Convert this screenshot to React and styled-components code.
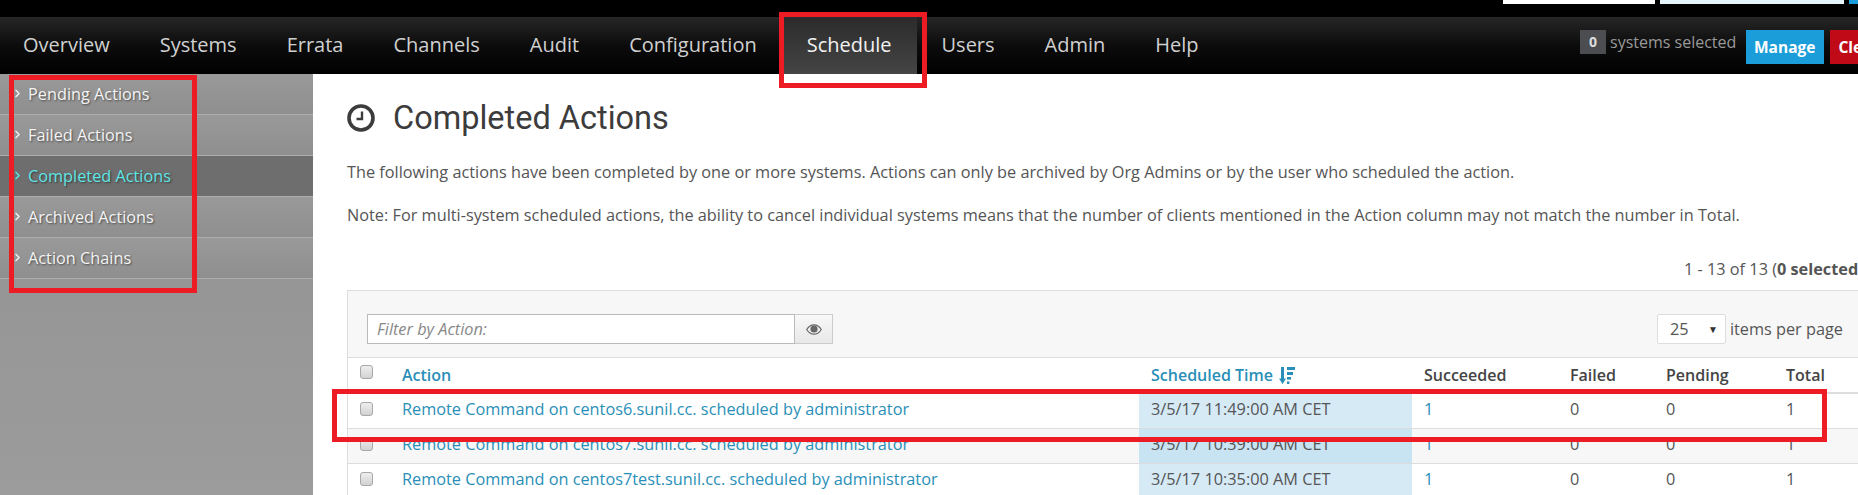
import React from "react";
import styled, { createGlobalStyle } from "styled-components";
import { ChevronRight } from "lucide-react";

const GlobalStyle = createGlobalStyle`
  html, body {
    margin: 0;
    height: 495px;
    overflow: hidden;
    background: #fff;
    font-family: "Open Sans", sans-serif;
    color: #555;
  }
  * { box-sizing: border-box; }
`;

const Page = styled.div`
  position: relative;
  width: 1858px;
  height: 495px;
  overflow: hidden;
`;

const TopStrip = styled.div`
  height: 17px;
  background: #000;
  display: flex;
  justify-content: flex-end;
  gap: 5px;
`;

const TopField = styled.div`
  width: ${(p) => p.$w}px;
  height: 4px;
  background: ${(p) => p.$bg || "#fff"};
`;

const NavBar = styled.div`
  height: 57px;
  display: flex;
  justify-content: space-between;
  background: linear-gradient(to bottom, #262626 0%, #0c0c0c 50%, #000 100%);
`;

const NavList = styled.div`
  display: flex;
`;

const NavItem = styled.div`
  padding: 0 25px 0 ${(p) => (p.$first ? 23 : 25)}px;
  height: 57px;
  line-height: 56px;
  font-size: 20px;
  color: ${(p) => (p.$active ? "#f2f2f2" : "#d0d0d0")};
  background: ${(p) => (p.$active ? "linear-gradient(to bottom, #2b2b2b, #454545)" : "none")};
`;

const SystemsBox = styled.div`
  display: flex;
  width: 278px;
  flex: none;
  padding-top: 13px;
  overflow: hidden;
`;

const CountBadge = styled.div`
  flex: none;
  width: 26px;
  height: 24px;
  background: #4b4d50;
  color: #ddd;
  font-weight: 700;
  font-size: 14px;
  line-height: 23px;
  text-align: center;
`;

const SystemsText = styled.div`
  flex: none;
  width: 140px;
  padding-left: 4px;
  font-size: 16px;
  line-height: 24px;
  color: #999;
  white-space: nowrap;
`;

const NavButton = styled.div`
  flex: none;
  height: 34px;
  line-height: 34px;
  padding: 0 9px 0 8px;
  margin-right: 6px;
  font-size: 15.5px;
  font-weight: 700;
  color: #fff;
  background: ${(p) => p.$bg};
`;

const Main = styled.div`
  display: flex;
  height: 421px;
`;

const Sidebar = styled.div`
  width: 313px;
  flex: none;
  background: linear-gradient(to bottom, #8f8f8f, #9c9c9c);
`;

const SideItem = styled.div`
  height: 41px;
  display: flex;
  align-items: center;
  padding: 0 0 1px 11px;
  gap: 4px;
  font-size: 16.3px;
  color: ${(p) => (p.$active ? "#5fe6e6" : "#f4f4f4")};
  background: ${(p) => (p.$active ? "#6e6e6e" : "linear-gradient(to bottom, #999, #8f8f8f)")};
  border-bottom: 1px solid #adadad;
  text-shadow: 1px 1px 2px rgba(0, 0, 0, 0.5);

  svg {
    flex: none;
  }
`;

const Content = styled.div`
  flex: 1;
  min-width: 0;
  padding: 0 0 0 34px;
`;

const Heading = styled.div`
  display: flex;
  align-items: center;
  gap: 18px;
  height: 32px;
  margin-top: 28px;
  color: #3c3c3c;
  font-family: Roboto, sans-serif;
  font-size: 32.5px;
`;

const Intro = styled.p`
  margin: ${(p) => p.$top}px 0 0;
  font-size: 16.3px;
  line-height: 22px;
  white-space: nowrap;
`;

const Count = styled.div`
  margin: 32px -5px 0 0;
  font-size: 16.3px;
  line-height: 22px;
  text-align: right;
  white-space: nowrap;

  b {
    font-weight: 700;
  }
`;

const Panel = styled.div`
  width: 1530px;
  margin-top: 10px;
  border: 1px solid #ddd;
  border-bottom: none;
`;

const FilterRow = styled.div`
  display: flex;
  justify-content: space-between;
  align-items: center;
  height: 67px;
  padding: 10px 33px 0 19px;
  background: #f7f7f7;
  border-bottom: 1px solid #ddd;
`;

const FilterGroup = styled.div`
  display: flex;
  align-items: center;
`;

const FilterInput = styled.div`
  width: 428px;
  height: 30px;
  padding-left: 9px;
  font-size: 16.3px;
  line-height: 28px;
  font-style: italic;
  color: #888;
  background: #fff;
  border: 1px solid #bbb;
`;

const EyeButton = styled.div`
  width: 38px;
  height: 30px;
  display: flex;
  align-items: center;
  justify-content: center;
  color: #666;
  background: linear-gradient(to bottom, #f8f8f8, #e8e8e8);
  border: 1px solid #ccc;
  border-left: none;
`;

const PageSize = styled.div`
  width: 69px;
  height: 30px;
  display: flex;
  align-items: center;
  justify-content: space-between;
  padding: 0 7px 0 12px;
  margin-right: 4px;
  font-size: 16.3px;
  background: #fff;
  border: 1px solid #ddd;
  border-radius: 2px;

  i {
    font-style: normal;
    font-size: 10px;
    color: #333;
  }
`;

const PageSizeLabel = styled.span`
  font-size: 16.3px;
`;

const Table = styled.table`
  width: 100%;
  table-layout: fixed;
  border-collapse: collapse;
  font-size: 16.3px;
`;

const HeadCell = styled.th`
  height: 35px;
  padding: 0 12px;
  text-align: left;
  font-size: 16px;
  font-weight: 600;
  color: ${(p) => (p.$link ? "#2a8fb8" : "#444")};
  background: #fff;
  border-bottom: 2px solid #ddd;
  white-space: nowrap;

  svg {
    margin-left: 6px;
    vertical-align: -3px;
  }
`;

const Cell = styled.td`
  height: 35px;
  padding: 0 12px 4px;
  white-space: nowrap;
  color: ${(p) => (p.$link ? "#2a8fb8" : "#555")};
  background: ${(p) =>
    p.$sorted ? (p.$odd ? "#c8e3f2" : "#d5eaf5") : p.$odd ? "#f7f7f7" : "#fff"};
  border-bottom: 1px solid #ddd;
`;

const Check = styled.span`
  display: block;
  width: 13px;
  height: 14px;
  border: 1px solid #a8a8a8;
  border-radius: 3px;
  background: linear-gradient(to bottom, #eee, #d2d2d2);
  margin: ${(p) => (p.$head ? "-6px 0 0" : "0")};
`;

const Highlight = styled.div`
  position: absolute;
  left: ${(p) => p.$x}px;
  top: ${(p) => p.$y}px;
  width: ${(p) => p.$w}px;
  height: ${(p) => p.$h}px;
  border: 5px solid #ed1c24;
  pointer-events: none;
`;

const ClockIcon = () => (
  <svg width="28" height="28" viewBox="0 0 28 28" fill="none" stroke="currentColor">
    <circle cx="14" cy="14" r="12" strokeWidth="3.6" />
    <path d="M15 7.5v7.5H9.5" strokeWidth="2.4" />
  </svg>
);

const EyeIcon = () => (
  <svg width="16" height="11" viewBox="0 0 16 11">
    <path d="M.7 5.5C2.6 2.4 5 .8 8 .8s5.4 1.6 7.3 4.7C13.4 8.6 11 10.2 8 10.2S2.6 8.6.7 5.5z" fill="none" stroke="currentColor" strokeWidth="1.2" />
    <circle cx="8" cy="5" r="3.6" fill="currentColor" />
  </svg>
);

const SortIcon = () => (
  <svg width="16" height="17" viewBox="0 0 16 17" fill="currentColor">
    <path d="M2 0h3v11.5h2L3.5 17 0 11.5h2z" />
    <rect x="8" y="0" width="8" height="3" />
    <rect x="8" y="5" width="6" height="3" />
    <rect x="8" y="10" width="4" height="2.6" />
    <rect x="8" y="14.4" width="2.4" height="2.6" />
  </svg>
);

const menu = ["Overview", "Systems", "Errata", "Channels", "Audit", "Configuration", "Schedule", "Users", "Admin", "Help"];
const sideLinks = ["Pending Actions", "Failed Actions", "Completed Actions", "Archived Actions", "Action Chains"];
const actions = [
  { host: "centos6", time: "3/5/17 11:49:00 AM CET" },
  { host: "centos7", time: "3/5/17 10:39:00 AM CET" },
  { host: "centos7test", time: "3/5/17 10:35:00 AM CET" },
];

export default function App() {
  return (
    <Page>
      <GlobalStyle />
      <TopStrip>
        <TopField $w={152} />
        <TopField $w={184} $bg="#e6f4fb" />
        <TopField $w={9} $bg="#1b9dd9" />
      </TopStrip>
      <NavBar>
        <NavList>
          {menu.map((m, i) => (
            <NavItem key={m} $first={i === 0} $active={m === "Schedule"}>{m}</NavItem>
          ))}
        </NavList>
        <SystemsBox>
          <CountBadge>0</CountBadge>
          <SystemsText>systems selected</SystemsText>
          <NavButton $bg="#1b9dd9">Manage</NavButton>
          <NavButton $bg="#c10a17">Clear</NavButton>
        </SystemsBox>
      </NavBar>
      <Main>
        <Sidebar>
          {sideLinks.map((s) => (
            <SideItem key={s} $active={s === "Completed Actions"}>
              <ChevronRight size={13} strokeWidth={2.4} />
              {s}
            </SideItem>
          ))}
        </Sidebar>
        <Content>
          <Heading>
            <ClockIcon />
            Completed Actions
          </Heading>
          <Intro $top={27}>
            The following actions have been completed by one or more systems. Actions can only be archived by Org Admins or by the user who scheduled the action.
          </Intro>
          <Intro $top={21}>
            Note: For multi-system scheduled actions, the ability to cancel individual systems means that the number of clients mentioned in the Action column may not match the number in Total.
          </Intro>
          <Count>1 - 13 of 13 (<b>0 selected</b>)</Count>
          <Panel>
            <FilterRow>
              <FilterGroup>
                <FilterInput>Filter by Action:</FilterInput>
                <EyeButton><EyeIcon /></EyeButton>
              </FilterGroup>
              <FilterGroup>
                <PageSize>25<i>▼</i></PageSize>
                <PageSizeLabel>items per page</PageSizeLabel>
              </FilterGroup>
            </FilterRow>
            <Table>
              <colgroup>
                <col width="42" />
                <col width="749" />
                <col width="273" />
                <col width="146" />
                <col width="96" />
                <col width="120" />
                <col width="104" />
              </colgroup>
              <thead>
                <tr>
                  <HeadCell><Check $head /></HeadCell>
                  <HeadCell $link>Action</HeadCell>
                  <HeadCell $link>Scheduled Time<SortIcon /></HeadCell>
                  <HeadCell>Succeeded</HeadCell>
                  <HeadCell>Failed</HeadCell>
                  <HeadCell>Pending</HeadCell>
                  <HeadCell>Total</HeadCell>
                </tr>
              </thead>
              <tbody>
                {actions.map((a, i) => (
                  <tr key={a.host}>
                    <Cell $odd={i === 1}><Check /></Cell>
                    <Cell $odd={i === 1} $link>Remote Command on {a.host}.sunil.cc. scheduled by administrator</Cell>
                    <Cell $odd={i === 1} $sorted>{a.time}</Cell>
                    <Cell $odd={i === 1} $link>1</Cell>
                    <Cell $odd={i === 1}>0</Cell>
                    <Cell $odd={i === 1}>0</Cell>
                    <Cell $odd={i === 1}>1</Cell>
                  </tr>
                ))}
              </tbody>
            </Table>
          </Panel>
        </Content>
      </Main>
      <Highlight $x={9} $y={75} $w={188} $h={218} />
      <Highlight $x={779} $y={12} $w={148} $h={76} />
      <Highlight $x={332} $y={389} $w={1495} $h={53} />
    </Page>
  );
}
